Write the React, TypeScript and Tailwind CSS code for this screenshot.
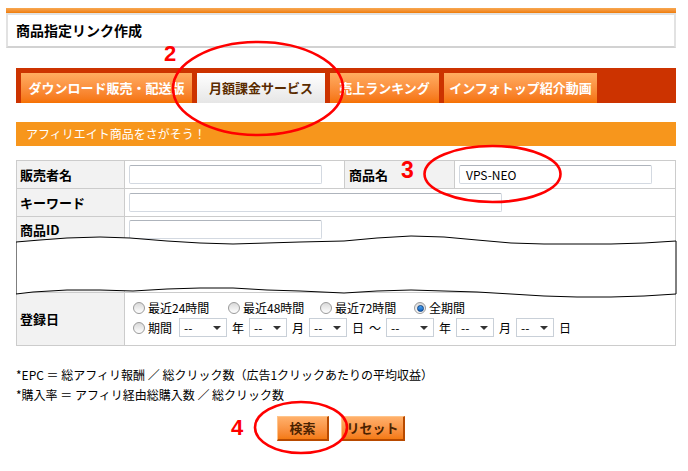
import React from "react";

function Input({ w, value }: { w: string; value?: string }) {
  return (
    <div
      className={`${w} h-[19px] bg-white border border-[#d3d9e1] border-t-[#aeb4bc] rounded-[2px] flex items-center pl-[6px] text-[12px] text-black font-['Noto_Sans_CJK_JP',sans-serif]`}
    >
      {value}
    </div>
  );
}

function Sel({ w }: { w: string }) {
  return (
    <div
      className={`${w} h-[19px] border border-[#c9d0d8] bg-white flex items-center justify-between pl-[4px] pr-[5px] text-[12px] leading-none`}
    >
      <span>--</span>
      <span className="w-0 h-0 border-l-[4px] border-r-[4px] border-t-[4px] border-l-transparent border-r-transparent border-t-[#333333]"></span>
    </div>
  );
}

function Radio({ checked }: { checked?: boolean }) {
  return (
    <span className="w-[12px] h-[12px] rounded-full border border-[#9a9a9a] bg-linear-to-b from-[#d9d9d9] to-[#ffffff] flex items-center justify-center shrink-0">
      {checked && (
        <span className="w-[7px] h-[7px] rounded-full bg-linear-to-b from-[#4aa3f0] to-[#0a5fc0] border border-[#0b3f80]"></span>
      )}
    </span>
  );
}

function Tab({ w, active, children }: { w: string; active?: boolean; children: React.ReactNode }) {
  return active ? (
    <div
      className={`${w} h-[30px] bg-linear-to-b from-[#ffffff] to-[#e6e6e6] flex items-center justify-center text-[13px] font-bold text-[#5a2c00]`}
    >
      {children}
    </div>
  ) : (
    <div
      className={`${w} h-[30px] bg-linear-to-b from-[#ffac60] to-[#f57200] flex items-center justify-center text-[13px] font-bold text-white`}
    >
      {children}
    </div>
  );
}

const topWave: [number, number][] = [
  [16, 242], [40, 240], [67, 238], [100, 237], [130, 238], [167, 241], [200, 243], [233, 244], [267, 243], [300, 242],
  [344, 241], [377, 238], [411, 236], [444, 237], [477, 240], [511, 243], [544, 244], [577, 244], [611, 244], [644, 243], [676, 241],
];
const bottomWave: [number, number][] = [
  [676, 294], [644, 296], [611, 297], [577, 297], [544, 296], [511, 294], [477, 292], [444, 291], [411, 290], [377, 291],
  [344, 293], [300, 291], [267, 290], [233, 288], [200, 288], [167, 289], [133, 291], [100, 290], [67, 290], [33, 292], [16, 294],
];
const tearPath =
  "M" + topWave.map((p) => p.join(",")).join(" L") + " L" + bottomWave.map((p) => p.join(",")).join(" L") + " Z";

export default function App() {
  return (
    <div className="relative w-[688px] h-[471px] overflow-hidden bg-white text-black font-['Noto_Sans_CJK_JP','Noto_Sans',sans-serif]">
      {/* header */}
      <div className="pt-[8px] px-[6px]">
        <div className="w-[670px] h-[5px] bg-linear-to-b from-[#f7a850] to-[#ef7d00]"></div>
        <div className="w-[670px] h-[35px] border-2 border-[#e2e2e2] border-b-[#d2d2d2] flex items-center pl-[8px] text-[14px] font-bold">
          商品指定リンク作成
        </div>
      </div>

      {/* tabs */}
      <div className="mt-[20px] ml-[16px] w-[660px] h-[35px] bg-[#cc3300] flex items-end gap-[5px] pl-[5px]">
        <Tab w="w-[171px]">ダウンロード販売・配送版</Tab>
        <Tab w="w-[128px]" active>
          月額課金サービス
        </Tab>
        <Tab w="w-[109px]">売上ランキング</Tab>
        <Tab w="w-[153px]">インフォトップ紹介動画</Tab>
      </div>

      {/* section header */}
      <div className="mt-[19px] ml-[16px] w-[660px] h-[24px] bg-[#f7961c] flex items-center pl-[10px] text-[12px] text-white">
        アフィリエイト商品をさがそう！
      </div>

      {/* table */}
      <div className="relative mt-[14px] ml-[16px] w-[660px] border border-[#cccccc] text-[13px]">
        <div className="flex h-[28px] border-b border-[#cccccc]">
          <div className="w-[108px] bg-[#f2f2f2] border-r border-[#cccccc] flex items-center pl-[3px] font-bold">販売者名</div>
          <div className="w-[219px] flex items-center pl-[4px]">
            <Input w="w-[193px]" />
          </div>
          <div className="w-[111px] bg-[#f2f2f2] border-l border-r border-[#cccccc] flex items-center pl-[4px] font-bold">商品名</div>
          <div className="flex-1 flex items-center pl-[4px]">
            <Input w="w-[193px]" value="VPS-NEO" />
          </div>
        </div>
        <div className="flex h-[28px] border-b border-[#cccccc]">
          <div className="w-[108px] bg-[#f2f2f2] border-r border-[#cccccc] flex items-center pl-[3px] font-bold">キーワード</div>
          <div className="flex-1 flex items-center pl-[4px]">
            <Input w="w-[373px]" />
          </div>
        </div>
        <div className="flex h-[76px] border-b border-[#cccccc]">
          <div className="w-[108px] bg-[#f2f2f2] border-r border-[#cccccc] pl-[3px] pt-[3px] font-bold leading-[19px]">商品ID</div>
          <div className="flex-1 pl-[4px] pt-[3px]">
            <Input w="w-[193px]" />
          </div>
        </div>
        <div className="flex h-[52px] text-[12px]">
          <div className="w-[108px] bg-[#f2f2f2] border-r border-[#cccccc] flex items-center pl-[3px] font-bold text-[13px]">登録日</div>
          <div className="flex-1 pl-[8px] pt-[7px] flex flex-col gap-[2px]">
            <div className="flex items-center h-[16px]">
              <div className="w-[95px] flex items-center gap-[3px]">
                <Radio />
                <span>最近24時間</span>
              </div>
              <div className="w-[92px] flex items-center gap-[3px]">
                <Radio />
                <span>最近48時間</span>
              </div>
              <div className="w-[94px] flex items-center gap-[3px]">
                <Radio />
                <span>最近72時間</span>
              </div>
              <div className="flex items-center gap-[3px]">
                <Radio checked />
                <span>全期間</span>
              </div>
            </div>
            <div className="flex items-center h-[19px] gap-[5px]">
              <div className="flex items-center gap-[3px] mr-[2px]">
                <Radio />
                <span>期間</span>
              </div>
              <Sel w="w-[48px]" />
              <span>年</span>
              <Sel w="w-[38px]" />
              <span>月</span>
              <Sel w="w-[38px]" />
              <span>日</span>
              <span>～</span>
              <Sel w="w-[48px]" />
              <span>年</span>
              <Sel w="w-[38px]" />
              <span>月</span>
              <Sel w="w-[38px]" />
              <span>日</span>
            </div>
          </div>
        </div>

        {/* torn out part */}
        <svg
          className="absolute left-[-1px] top-[69px]"
          width="662"
          height="72"
          viewBox="16 230 662 72"
        >
          <path d={tearPath} fill="#ffffff" stroke="#000000" strokeWidth="1" strokeLinejoin="round" />
        </svg>
      </div>

      {/* notes */}
      <div className="mt-[19px] ml-[16px] text-[12px] leading-[20px]">
        <div>*EPC ＝ 総アフィリ報酬 ／ 総クリック数（広告1クリックあたりの平均収益）</div>
        <div>*購入率 ＝ アフィリ経由総購入数 ／ 総クリック数</div>
      </div>

      {/* buttons */}
      <div className="mt-[11px] flex justify-center gap-[12px] pr-[6px]">
        <div className="w-[52px] h-[25px] bg-linear-to-b from-[#ffb06a] to-[#f47a10] border border-[#ffc48a] border-r-2 border-b-2 border-r-[#b84a00] border-b-[#b84a00] flex items-center justify-center text-[13px] font-bold text-[#4a2200]">
          検索
        </div>
        <div className="w-[64px] h-[25px] bg-linear-to-b from-[#ffb06a] to-[#f47a10] border border-[#ffc48a] border-r-2 border-b-2 border-r-[#b84a00] border-b-[#b84a00] flex items-center justify-center text-[13px] font-bold text-[#4a2200]">
          リセット
        </div>
      </div>

      {/* annotations */}
      <svg className="absolute left-0 top-0 pointer-events-none" width="688" height="471" viewBox="0 0 688 471">
        <ellipse cx="258" cy="88.5" rx="85" ry="46.5" fill="none" stroke="#ff0000" strokeWidth="2.6" />
        <ellipse cx="492.5" cy="174" rx="68" ry="28" fill="none" stroke="#ff0000" strokeWidth="2.6" />
        <ellipse cx="301" cy="427.5" rx="46" ry="25.5" fill="none" stroke="#ff0000" strokeWidth="2.6" />
      </svg>
      <div className="absolute left-[164px] top-[42px] text-[22px] font-bold text-[#ff0000] leading-[24px] font-['Liberation_Sans',sans-serif]">2</div>
      <div className="absolute left-[401px] top-[158px] text-[23px] font-bold text-[#ff0000] leading-[24px] font-['Liberation_Sans',sans-serif]">3</div>
      <div className="absolute left-[231px] top-[416px] text-[22px] font-bold text-[#ff0000] leading-[24px] font-['Liberation_Sans',sans-serif]">4</div>
    </div>
  );
}
